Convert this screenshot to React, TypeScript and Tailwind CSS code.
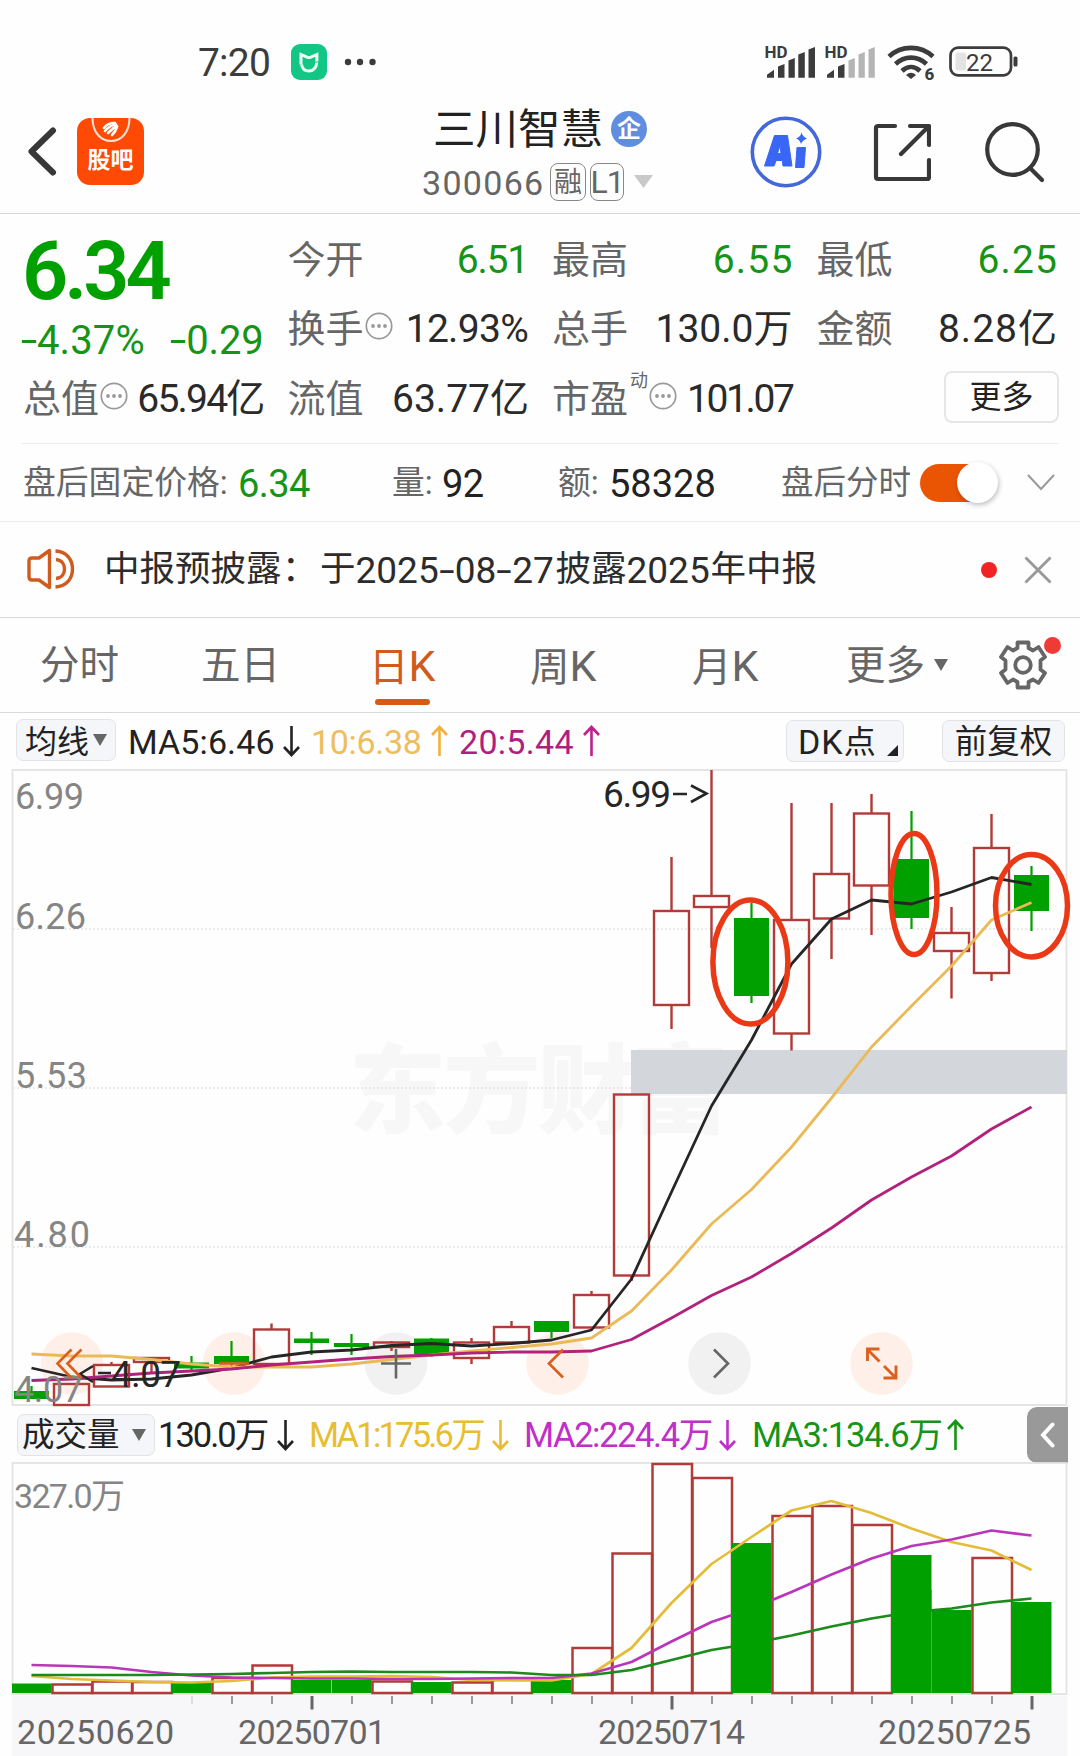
import React from 'react';

interface Candle {
  up: boolean;
  top: number;
  bottom: number;
  high: number;
  low: number;
  volumeTop: number;
}

const candles: Candle[] = [
  { up: false, top: 1391, bottom: 1399, high: 1386, low: 1399, volumeTop: 1683.5 },
  { up: true, top: 1384, bottom: 1405, high: 1384, low: 1405, volumeTop: 1684.5 },
  { up: true, top: 1365, bottom: 1386.5, high: 1362, low: 1386.5, volumeTop: 1681.5 },
  { up: true, top: 1358, bottom: 1362, high: 1358, low: 1373, volumeTop: 1682 },
  { up: false, top: 1362.5, bottom: 1368.5, high: 1356, low: 1372, volumeTop: 1682 },
  { up: false, top: 1356, bottom: 1364, high: 1341, low: 1367, volumeTop: 1678 },
  { up: true, top: 1329.5, bottom: 1364, high: 1323.5, low: 1364, volumeTop: 1665.5 },
  { up: false, top: 1338.5, bottom: 1343, high: 1332, low: 1355, volumeTop: 1680 },
  { up: false, top: 1343, bottom: 1347, high: 1334, low: 1355, volumeTop: 1680 },
  { up: true, top: 1342.5, bottom: 1347, high: 1341, low: 1351, volumeTop: 1681.5 },
  { up: false, top: 1338.5, bottom: 1354, high: 1338, low: 1357, volumeTop: 1682 },
  { up: true, top: 1342.5, bottom: 1358, high: 1338, low: 1364, volumeTop: 1682.5 },
  { up: true, top: 1327, bottom: 1342.5, high: 1321, low: 1342.5, volumeTop: 1680 },
  { up: false, top: 1321, bottom: 1332, high: 1321, low: 1338, volumeTop: 1680 },
  { up: true, top: 1295, bottom: 1327.5, high: 1291, low: 1327.5, volumeTop: 1648 },
  { up: true, top: 1094.5, bottom: 1275.5, high: 1094.5, low: 1281, volumeTop: 1553.5 },
  { up: true, top: 911, bottom: 1005, high: 857, low: 1029, volumeTop: 1464 },
  { up: true, top: 896, bottom: 907, high: 770, low: 948, volumeTop: 1478 },
  { up: false, top: 918, bottom: 996, high: 903, low: 1003, volumeTop: 1543 },
  { up: true, top: 920, bottom: 1033.5, high: 803, low: 1050.5, volumeTop: 1516 },
  { up: true, top: 874, bottom: 918.5, high: 803, low: 959, volumeTop: 1506 },
  { up: true, top: 813.5, bottom: 885.5, high: 794, low: 935, volumeTop: 1525 },
  { up: false, top: 859, bottom: 918, high: 811, low: 929, volumeTop: 1555 },
  { up: true, top: 933, bottom: 951, high: 907, low: 998.5, volumeTop: 1610 },
  { up: true, top: 848, bottom: 973, high: 814, low: 981, volumeTop: 1558 },
  { up: false, top: 875, bottom: 911, high: 866, low: 931, volumeTop: 1602 },
];

// volume colours do not always follow the candle body
const redVolumeDays = [5];
const greenVolumeDays = [23];

const ma5 = [1368, 1377, 1380, 1379, 1375, 1368, 1357, 1352, 1350, 1345.5, 1343.5, 1346, 1343.5, 1340, 1330, 1279, 1192, 1106, 1040, 964, 919, 900, 904, 892, 877.5, 884.5];
const ma10 = [1354, 1356, 1356, 1359.5, 1364, 1367, 1367, 1367, 1364, 1359.5, 1355, 1351, 1347.5, 1344, 1338, 1311, 1270, 1224, 1189.5, 1147, 1098, 1047, 1006, 966, 920, 902.5];
const ma20 = [1380.5, 1379, 1376, 1373, 1371, 1369, 1365, 1362, 1359, 1356.5, 1355, 1353, 1352, 1352, 1351, 1339.5, 1318, 1295.5, 1277, 1253.5, 1228, 1200, 1177, 1156, 1129, 1107];

const vol1 = [1676, 1679, 1680.5, 1682, 1682.5, 1681, 1677.5, 1676.5, 1676.5, 1676, 1677, 1680, 1680, 1680.5, 1674, 1648, 1603, 1564, 1537, 1510.5, 1501, 1513, 1528.5, 1542, 1550.5, 1570];
const vol2 = [1665, 1666, 1667.5, 1672, 1675.5, 1677.5, 1678, 1678.5, 1678.5, 1679, 1679, 1678.5, 1678, 1678, 1673.5, 1662, 1641.5, 1622, 1608.5, 1592, 1574.5, 1558.5, 1546, 1539.5, 1530.5, 1535.5];
const vol3 = [1675, 1675, 1675, 1675, 1674.5, 1674, 1673, 1672, 1671.5, 1672, 1672, 1672, 1672.5, 1675, 1675, 1670, 1660, 1650, 1643.5, 1635.5, 1626.5, 1618.5, 1612, 1608.5, 1602.5, 1598.5];

const xAt = (i: number) => 31.5 + 40 * i;
const toPoints = (ys: number[]) => ys.map((y, i) => `${xAt(i)},${y}`).join(' ');

const Caret: React.FC<{ className?: string }> = ({ className }) => (
  <svg viewBox="0 0 14 12" preserveAspectRatio="none" className={`shrink-0 ${className ?? 'w-[14px] h-3'}`}>
    <path d="M0 0h14L7 12z" fill="currentColor" />
  </svg>
);

const Info = () => (
  <svg width="28" height="28" viewBox="0 0 28 28" className="shrink-0">
    <circle cx="14" cy="14" r="12.7" fill="none" stroke="#999" strokeWidth="1.7" />
    <g fill="#999">
      <circle cx="8" cy="14" r="1.9" />
      <circle cx="14" cy="14" r="1.9" />
      <circle cx="20" cy="14" r="1.9" />
    </g>
  </svg>
);

const Arrow: React.FC<{ up?: boolean }> = ({ up }) => (
  <svg width="17" height="32" viewBox="0 0 17 32" className="shrink-0" fill="none" stroke="currentColor" strokeWidth="2.6">
    {up ? <path d="M8.500 31V2.500M1 10l7.500-8L16 10" /> : <path d="M8.500 1v28.500M1 22l7.500 8 7.500-8" />}
  </svg>
);

const Dash = () => <span className="inline-block w-[16px] text-center scale-x-150">-</span>;

const StatusBar = () => (
  <div className="mt-8 h-[60px] flex items-center text-[#3c3c3c]">
    <span className="ml-[198px] w-[93px] pt-[2px] text-[39px] tracking-[-0.8px]">7:20</span>
    <svg width="36" height="36" viewBox="0 0 36 36">
      <rect width="36" height="36" rx="9" fill="#12c785" />
      <path d="M10 20.500V10.500l6 2.700c1.200.5 2.700.5 3.900 0l6-2.700v7" fill="none" stroke="#eafff6" strokeWidth="3" />
      <path d="M10.500 20.500c.8 4.200 3.800 6.600 7.500 6.600s7.500-3 7.700-8.600" fill="none" stroke="#eafff6" strokeWidth="3" />
    </svg>
    <svg width="32" height="8" viewBox="0 0 32 8" className="ml-[17px]" fill="currentColor">
      <circle cx="4" cy="4" r="3.200" />
      <circle cx="16" cy="4" r="3.200" />
      <circle cx="28.500" cy="4" r="3.200" />
    </svg>
    <svg width="256" height="50" viewBox="764 37.500 256 50" className="ml-auto mr-[60px] overflow-visible" fill="currentColor">
      <text x="764.500" y="58.500" fontSize="17" fontWeight="700">HD</text>
      <path d="M767 78.200v-3l7-5v8zM778 78.200V67l6.500-2.500v13.700zM788.500 78.200V61l6.300-2.500v19.700zM798.300 78.200V55l6.500-2.500v25.700zM808.500 78.200V50l6.500-2.500v30.700z" />
      <text x="824.500" y="58.500" fontSize="17" fontWeight="700">HD</text>
      <path d="M827 78.200v-3l7-5v8zM838 78.200V67l6.500-2.500v13.700z" />
      <path d="M848.500 78.200V61l6.300-2.500v19.700zM858.500 78.200V55l6.300-2.500v25.700zM868.500 78.200V50l6.300-2.500v30.700z" fill="#b5b5b5" />
      <g fill="none" stroke="currentColor" strokeWidth="4.600">
        <path d="M889 57c12.500-11.500 31.500-11.500 44 0" />
        <path d="M895.500 64.500c9-8.500 22-8.500 31 0" />
        <path d="M902 71.500c5.500-5.300 12.500-5.300 18 0" />
      </g>
      <path d="M906 75.500q5-4.500 10 0l-5 4z" />
      <text x="924.500" y="80" fontSize="17" fontWeight="800">6</text>
      <rect x="950.500" y="48.200" width="60.500" height="27.600" rx="7.500" fill="none" stroke="currentColor" strokeWidth="2.700" />
      <rect x="955.500" y="53" width="10.500" height="18" rx="2" fill="#e3e3e3" />
      <rect x="1013.500" y="57" width="4" height="10" rx="1.500" />
      <text x="966" y="71" fontSize="24">22</text>
    </svg>
  </div>
);

const Header = () => (
  <header className="h-[122px] pb-[2px] flex items-center border-b border-[#d6d6d6]">
    <svg width="30" height="50" viewBox="0 0 30 50" className="ml-[27px]">
      <path d="M26 3.500L4.500 24.500 26 45.500" fill="none" stroke="#383838" strokeWidth="6" strokeLinecap="round" strokeLinejoin="round" />
    </svg>
    <div className="ml-5 w-[67px] h-[67px] rounded-[13px] bg-[#ff4a05] flex flex-col items-center text-white">
      <svg width="42" height="26" viewBox="0 0 42 26">
        <path d="M2.500 0c0 14 8 23 18.500 23S39.500 14 39.500 0" fill="none" stroke="#ffe3d6" strokeWidth="2" />
        <g fill="none" stroke="#fff" strokeWidth="2.600" strokeLinecap="round">
          <path d="M14 10q3-5 11-5" />
          <path d="M15 13q5-6 11-6.500" />
          <path d="M18 15q5-5 9-7" />
          <path d="M22 17q4-4 5-8" />
        </g>
      </svg>
      <span className="mt-[5px] text-[23px] leading-6 font-bold">股吧</span>
    </div>
    <div className="ml-[276px] w-[235px] pt-[5px] flex flex-col">
      <div className="ml-[13px] h-[42px] flex items-center">
        <span className="pt-[2px] text-[42.5px] leading-[42px] text-[#222]">三川智慧</span>
        <span className="ml-[8px] size-9 rounded-full bg-[#5f8de0] text-white text-[24px] leading-9 font-bold text-center">企</span>
      </div>
      <div className="mt-[13px] h-[38px] flex items-center text-[#666]">
        <span className="ml-[2px] pt-[2px] w-[128px] text-[34px] tracking-[1.3px]">300066</span>
        <span className="w-9 h-[38px] border-[1.5px] border-[#888] rounded-[8px] text-[28px] leading-[37px] flex justify-center">融</span>
        <span className="ml-1 w-[34px] h-[38px] border-[1.5px] border-[#888] rounded-[8px] text-[32px] leading-[37px] tracking-[-1px] flex justify-center">L1</span>
        <Caret className="ml-2.5 w-[19px] h-[13px] text-[#c9c9c9]" />
      </div>
    </div>
    <svg width="72" height="72" viewBox="0 0 72 72" className="ml-[95px]">
      <circle cx="36" cy="36" r="33.700" fill="none" stroke="#4468da" strokeWidth="3.600" />
      <path d="M24.500 19.500h13l4.500 30.500h-9l-.8-5.500h-6l-2.200 5.500H14.500zM30 29.500l-2.500 8h3.500z" fill="#3a66f5" stroke="#3a66f5" strokeLinejoin="round" />
      <path d="M47 31.500h8.500l-1.500 20h-8.500z" fill="#3a66f5" stroke="#3a66f5" strokeLinejoin="round" />
      <path d="M51.500 16.500q1.500 4.500 5.500 6-4.500 1.500-6 5.500-1.200-4.500-5-5.500 4.500-1.500 5.500-6z" fill="#3a66f5" />
    </svg>
    <svg width="58" height="60" viewBox="0 0 58 60" className="ml-[51px]" fill="none" stroke="#383838" strokeWidth="4.200" strokeLinecap="round" strokeLinejoin="round">
      <path d="M22 4H5q-2 0-2 2v49q0 2 2 2h49q2 0 2-2V38" />
      <path d="M37 4h19v19M54.500 5.500L28 32" />
    </svg>
    <svg width="62" height="62" viewBox="0 0 62 62" className="ml-[53px]" fill="none" stroke="#383838" strokeWidth="4.200" strokeLinecap="round">
      <circle cx="28.500" cy="28.500" r="25.300" />
      <path d="M46 47l12 12" />
    </svg>
  </header>
);

interface FieldProps {
  label: string;
  value: string;
  tone?: string;
  info?: boolean;
  note?: string;
}

const Field: React.FC<FieldProps> = ({ label, value, tone, info, note }) => (
  <div className="h-[69px] flex items-center">
    <span className="pt-[2px] text-[38px] text-[#666]">{label}</span>
    {note && <span className="-mt-[34px] ml-[2px] text-[18px] text-[#666]">{note}</span>}
    {info && <span className="-mt-[4px] ml-[1px]"><Info /></span>}
    <span className={`ml-auto pt-[3px] whitespace-nowrap text-[39px] ${tone ?? 'text-[#2a2a2a]'}`}>{value}</span>
  </div>
);

const Quote = () => (
  <section className="h-[229px] pt-[10px] px-[23px] grid grid-cols-4 gap-x-6 content-start">
    <div className="row-span-2 text-[#00a000]">
      <div className="pt-[8px] h-[80px] -ml-[1px] text-[81px] leading-[80px] font-semibold tracking-[-4px]">6.34</div>
      <div className="mt-[15px] flex items-center justify-between text-[40px] leading-[44px] text-[#159415]">
        <span className="-ml-[2px] tracking-[0.1px]"><Dash />4.37%</span>
        <span className="tracking-[-0.2px]"><Dash />0.29</span>
      </div>
    </div>
    <Field label="今开" value="6.51" tone="tracking-[-1.2px] text-[#159415]" />
    <Field label="最高" value="6.55" tone="-mr-[1px] tracking-[1.2px] text-[#159415]" />
    <Field label="最低" value="6.25" tone="-mr-[1px] tracking-[1.1px] text-[#159415]" />
    <Field label="换手" value="12.93%" tone="tracking-[-0.7px] text-[#2a2a2a]" info />
    <Field label="总手" value="130.0万" />
    <Field label="金额" value="8.28亿" tone="-mr-[1px] tracking-[1px] text-[#2a2a2a]" />
    <Field label="总值" value="65.94亿" tone="tracking-[-1.8px] text-[#2a2a2a]" info />
    <Field label="流值" value="63.77亿" tone="-mr-[1px] text-[#2a2a2a]" />
    <Field label="市盈" value="101.07" tone="tracking-[-2.4px] text-[#2a2a2a]" note="动" info />
    <div className="flex items-center justify-end">
      <button className="-mr-[2px] -mt-[2px] w-[115px] h-[52px] rounded-[8px] border-2 border-[#e6e6e8] text-[32px] text-[#222]">更多</button>
    </div>
  </section>
);

const AfterHours = () => (
  <section className="mx-[22px] h-[78px] border-t border-[#ebebeb] flex items-center whitespace-nowrap text-[#666] text-[32.8px]">
    <span className="ml-[1px] pt-[2px] w-[215px]">盘后固定价格:</span>
    <span className="w-[154px] pt-[2px] text-[38px] tracking-[-0.6px] text-[#159415]">6.34</span>
    <span className="w-[50px] pt-[2px]">量:</span>
    <span className="w-[116px] pt-[2px] text-[38px] tracking-[-0.6px] text-[#222]">92</span>
    <span className="w-[51px] pt-[2px]">额:</span>
    <span className="w-[172px] pt-[2px] text-[38px] tracking-[0px] text-[#222]">58328</span>
    <span className="pt-[2px] text-[32.5px]">盘后分时</span>
    <span className="ml-[9px] w-[78px] h-[38px] rounded-full bg-gradient-to-r from-[#ea5504] from-65% to-transparent to-90% flex justify-end items-center">
      <span className="size-[41px] rounded-full bg-white shadow-[1px_2px_5px_rgba(0,0,0,0.25)]" />
    </span>
    <svg width="28" height="17" viewBox="0 0 28 17" className="ml-[29px]">
      <path d="M1 1l13 14L27 1" fill="none" stroke="#999" strokeWidth="2" />
    </svg>
  </section>
);

const Notice = () => (
  <section className="h-[97px] border-y border-t-[#ebebeb] border-b-[#d9d9d9] flex items-center whitespace-nowrap text-[35.5px] text-[#2c2c2c]">
    <svg width="48" height="42" viewBox="0 0 48 42" className="ml-[27px] -mt-[2px]" fill="none" stroke="#cf5b1e" strokeWidth="3.400" strokeLinejoin="round">
      <path d="M22.500 2.500L12 10H5q-3 0-3 3v16q0 3 3 3h7l10.500 7.500z" />
      <path d="M28.500 3C40 3.500 45.500 12 45.500 21S40 38.500 28.500 39" />
      <path d="M29 11.500c6 .5 8.500 5 8.500 9.500s-2.500 9-8.500 9.500" />
    </svg>
    <div className="ml-[29px] pt-[1px] flex items-center">
      <span className="w-[178px]">中报预披露</span>
      <span className="w-[38px]">：</span>
      <span>于</span>
      <span className="w-[200px] text-[37px]">2025<Dash />08<Dash />27</span>
      <span>披露</span>
      <span className="w-[84px] text-[37px]">2025</span>
      <span>年中报</span>
    </div>
    <span className="ml-auto size-4 rounded-full bg-[#f02424]" />
    <svg width="28" height="28" viewBox="0 0 28 28" className="ml-[27px] mr-[28px]">
      <path d="M1.500 1.500l25 25M26.500 1.500l-25 25" stroke="#999" strokeWidth="2.900" />
    </svg>
  </section>
);

const Tabs = () => (
  <nav className="h-[95px] border-b border-[#d9d9d9] flex items-center whitespace-nowrap text-[39.5px] text-[#666]">
    <span className="ml-[40px] pt-[2px] w-[161px]">分时</span>
    <span className="w-[168px] pt-[2px]">五日</span>
    <span className="relative w-[161px] pt-[2px] text-[#cf5b1e]">
      日<span className="text-[43px]">K</span>
      <span className="absolute left-[6px] -bottom-[17px] w-[55px] h-[6px] rounded-full bg-[#d65c16]" />
    </span>
    <span className="w-[162px] pt-[2px]">周<span className="text-[43px]">K</span></span>
    <span className="w-[154px] pt-[2px]">月<span className="text-[43px]">K</span></span>
    <span className="pt-[2px]">更多</span>
    <Caret className="ml-[9px] w-[14px] h-[12px]" />
    <span className="relative ml-[50px]">
      <svg width="50" height="50" viewBox="-25 -25 50 50" fill="none" stroke="#666" strokeWidth="3.800">
        <circle r="7.800" />
        <path d="M-5.500-22.500H5.500V-17L10-14.500 15.500-18 22-8 17.500-4.500V4.500L22 8 15.500 18 10 14.500 5.500 17V22.500H-5.500V17L-10 14.500-15.500 18-22 8-17.500 4.500V-4.500L-22-8-15.500-18-10-14.500-5.500-17z" strokeLinejoin="round" />
      </svg>
      <span className="absolute -top-[3px] left-[46px] size-[17px] rounded-full bg-[#f03a35]" />
    </span>
  </nav>
);

const MaBar = () => (
  <div className="h-[52px] pt-[4px] flex items-center whitespace-nowrap text-[34px] text-[#222]">
    <button className="ml-4 w-[100px] h-[42px] -mt-[2px] rounded-[7px] border border-[#e1e3e7] bg-[#f5f6f9] flex items-center pl-[8px] text-[32px]">
      <span className="pt-[3px]">均线</span>
      <Caret className="ml-[4px] w-[14px] h-[12px] text-[#666]" />
    </button>
    <span className="ml-[12px] pt-[1px] w-[155px] tracking-[0.1px]">MA5:6.46</span>
    <Arrow />
    <span className="ml-[11px] pt-[1px] w-[120px] tracking-[-0.3px] text-[#eebd5c]">10:6.38</span>
    <span className="text-[#f2b13c]"><Arrow up /></span>
    <span className="ml-[11px] pt-[1px] w-[124px] tracking-[0.3px] text-[#b01f80]">20:5.44</span>
    <span className="text-[#c0208c]"><Arrow up /></span>
    <button className="ml-auto w-[118px] h-[42px] rounded-[7px] border border-[#e1e3e7] bg-[#f5f6f9] flex items-center pl-[11px]">
      <span className="pt-[1px] tracking-[1px]">DK</span>
      <span className="text-[32px] pt-[1px]">点</span>
      <svg width="11" height="11" viewBox="0 0 11 11" className="ml-auto mr-[5px] mt-[18px]">
        <path d="M11 0v11H0z" fill="#222" />
      </svg>
    </button>
    <button className="ml-[38px] mr-[15px] w-[123px] h-[42px] rounded-[7px] border border-[#e1e3e7] bg-[#f5f6f9] pt-[2px] text-[32.5px]">前复权</button>
  </div>
);

const CandleChart = () => (
  <svg width="1080" height="645" viewBox="0 765 1080 645" className="block">
    <text x="349" y="1125" fontSize="97" fontWeight="800" fill="#f7f7f7" textLength="380">东方财富</text>
    <g stroke="#d9d9d9" strokeWidth="1.200" strokeDasharray="2 2">
      <path d="M13 929H1066M13 1088H1066M13 1247H1066" />
    </g>
    <rect x="12.500" y="770" width="1054" height="635" fill="none" stroke="#e3e3e3" strokeWidth="1.800" />
    <rect x="631" y="1050" width="436" height="44" fill="#d3d6db" />
    {[72, 234, 396, 557.5, 719.5, 881.5].map((cx, i) => (
      <circle key={cx} cx={cx} cy="1363.500" r="31.300" fill={i === 2 || i === 4 ? '#f1f1f1' : '#fef0e9'} />
    ))}
    {candles.map((c, i) => {
      const x = xAt(i);
      return c.up ? (
        <g key={i} stroke="#b23a38" strokeWidth="2.400" fill="none">
          <path d={`M${x} ${c.high}V${c.top}M${x} ${c.bottom}V${c.low}`} />
          <rect x={x - 17.5} y={c.top} width="35" height={c.bottom - c.top} />
        </g>
      ) : (
        <g key={i} fill="#00a000">
          <rect x={x - 1.1} y={c.high} width="2.200" height={c.low - c.high} />
          <rect x={x - 17.5} y={c.top} width="35" height={c.bottom - c.top} />
        </g>
      );
    })}
    <g fill="none" strokeWidth="2.800" strokeLinejoin="round">
      <polyline points={toPoints(ma5)} stroke="#262626" />
      <polyline points={toPoints(ma10)} stroke="#ebba58" />
      <polyline points={toPoints(ma20)} stroke="#b0227c" />
    </g>
    <g fontSize="36" fill="#858585">
      <text x="15" y="809" textLength="69">6.99</text>
      <text x="15" y="929" textLength="71">6.26</text>
      <text x="15" y="1088" textLength="72">5.53</text>
      <text x="14" y="1247" textLength="76">4.80</text>
      <text x="14" y="1402" textLength="69">4.07</text>
    </g>
    <g fontSize="37" fill="#262626">
      <text x="603" y="807" textLength="68">6.99</text>
      <text x="111" y="1387" textLength="70">4.07</text>
    </g>
    <g fill="none" stroke="#262626" strokeWidth="2.600">
      <path d="M673 794h14M691 785.500l15.500 8-15.500 8.500" />
      <path d="M93 1366l-13 8 13 8M98 1373h13" />
    </g>
    <g fill="none" stroke="#d9601f" strokeWidth="2.700">
      <path d="M71.500 1349.500l-14 14 14 14.500M81.500 1349.500l-14 14 14 14.500" />
      <path d="M219 1363.500h30" />
      <path d="M563 1349.500l-14 14 14 14" />
      <path d="M867.500 1361v-12h12M868 1350l11.500 11.500M883.500 1378h12.500v-12.500M895.500 1377.500L884 1366" strokeWidth="2.900" />
    </g>
    <g fill="none" stroke="#666" strokeWidth="2.600">
      <path d="M381 1363.500h30M396 1349v29.500" />
      <path d="M714 1349.500l14 14-14 14" />
    </g>
    <g fill="none" stroke="#ea3916" strokeWidth="5.500">
      <ellipse cx="750.400" cy="962" rx="37.500" ry="62" />
      <ellipse cx="914" cy="894" rx="23" ry="60.500" />
      <ellipse cx="1031.500" cy="905.700" rx="36" ry="51.200" />
    </g>
  </svg>
);

const VolumeBar = () => (
  <div className="h-[50px] flex items-center whitespace-nowrap text-[34.5px] tracking-[-2px] text-[#222]">
    <button className="ml-[17px] w-[138px] h-[42px] rounded-[7px] border border-[#e1e3e7] bg-[#f5f6f9] flex items-center pl-[4px] text-[32.5px] tracking-normal">
      <span className="pt-[1px]">成交量</span>
      <Caret className="ml-[12px] w-[14px] h-[12px] text-[#666]" />
    </button>
    <span className="ml-[3px] pt-[1px] w-[119px]">130.0万</span>
    <Arrow />
    <span className="ml-[15px] pt-[1px] w-[183px] tracking-[-2.8px] text-[#e6be30]">MA1:175.6万</span>
    <span className="text-[#e6be30]"><Arrow /></span>
    <span className="ml-[15px] pt-[1px] w-[195px] tracking-[-1.4px] text-[#c02fc8]">MA2:224.4万</span>
    <span className="text-[#c02fc8]"><Arrow /></span>
    <span className="ml-[16px] pt-[1px] w-[195px] tracking-[-1.2px] text-[#159415]">MA3:134.6万</span>
    <span className="text-[#159415]"><Arrow up /></span>
    <span className="ml-auto mr-3 -mt-[1px] w-[41px] h-[56px] rounded-l-[10px] bg-[#999] flex items-center justify-center">
      <svg width="15" height="26" viewBox="0 0 15 26">
        <path d="M12.500 2.500L3 13l9.500 10.500" fill="none" stroke="#fff" strokeWidth="4" strokeLinecap="round" />
      </svg>
    </span>
  </div>
);

const VolumeChart = () => (
  <svg width="1080" height="296" viewBox="0 1460 1080 296" className="block">
    <rect x="12" y="1695.500" width="1055.500" height="61" fill="#f7f7f9" />
    <rect x="12.500" y="1463" width="1054" height="231" fill="none" stroke="#e3e3e3" strokeWidth="1.800" />
    {candles.map((c, i) => {
      const x = xAt(i);
      const red = redVolumeDays.includes(i) || (c.up && !greenVolumeDays.includes(i));
      return red ? (
        <rect key={i} x={x - 19} y={c.volumeTop} width="39.500" height={1693 - c.volumeTop} fill="none" stroke="#b23a38" strokeWidth="2.500" />
      ) : (
        <rect key={i} x={x - 19.5} y={c.volumeTop} width="39.500" height={1693 - c.volumeTop} fill="#00a000" />
      );
    })}
    <g fill="none" strokeWidth="2.700" strokeLinejoin="round">
      <polyline points={toPoints(vol1)} stroke="#e3bd38" />
      <polyline points={toPoints(vol2)} stroke="#bb35bb" />
      <polyline points={toPoints(vol3)} stroke="#1c8a1c" />
    </g>
    {/* the long average is not visible over the tall green bars */}
    {[18, 22].map((i) => (
      <rect key={i} x={xAt(i) - 19.5} y={1590} width="39.500" height="103" fill="#00a000" />
    ))}
    <text x="14" y="1508" fontSize="34" fill="#858585" textLength="111">327.0万</text>
    {candles.map((_, i) => {
      if (i < 4) return null;
      const major = i === 7 || i === 16 || i === 25;
      return (
        <rect
          key={i}
          x={xAt(i) - (major ? 1 : 0.5)}
          y="1696"
          width={major ? 3 : 2}
          height={major ? 13.5 : 8}
          fill={major ? '#666' : i === 4 ? '#ddd' : '#999'}
        />
      );
    })}
    <g fontSize="34" fill="#666">
      <text x="17" y="1744" textLength="157">20250620</text>
      <text x="238" y="1744" textLength="148">20250701</text>
      <text x="598" y="1744" textLength="147">20250714</text>
      <text x="878" y="1744" textLength="153">20250725</text>
    </g>
  </svg>
);

export default function App() {
  return (
    <div className="w-[1080px] h-[1756px] overflow-hidden bg-[#fefefe] leading-none font-['Roboto','Noto_Sans_CJK_SC',sans-serif]">
      <StatusBar />
      <Header />
      <Quote />
      <AfterHours />
      <Notice />
      <Tabs />
      <MaBar />
      <CandleChart />
      <VolumeBar />
      <VolumeChart />
    </div>
  );
}
